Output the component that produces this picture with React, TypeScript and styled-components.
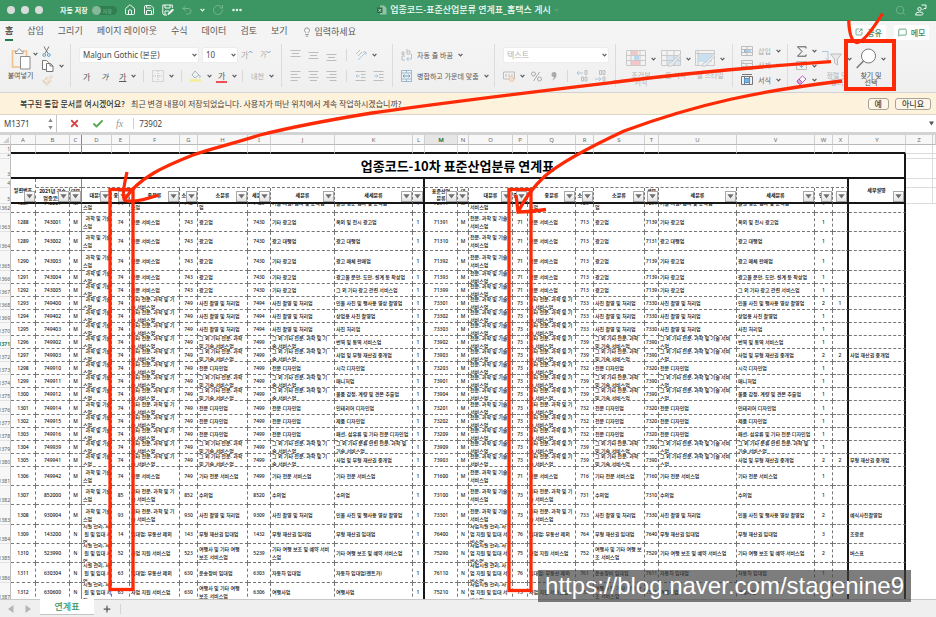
import React from "react";
import styled, { createGlobalStyle, css } from "styled-components";
import { House, Save, Undo2, RotateCw, Ellipsis, Search, Lightbulb, Paintbrush, MessageSquare, SquareArrowOutUpRight, X, Check, Plus } from "lucide-react";

const KR = '"Noto Sans", "Noto Sans CJK KR", sans-serif';
const RED = "#fd2a05";

const Global = createGlobalStyle`
  * { box-sizing: border-box; }
  body { margin: 0; background: #fff; font-family: ${KR}; overflow: hidden; }
  button, input, select { font: inherit; color: inherit; margin: 0; }
  button { padding: 0; border: 0; background: none; }
  svg { display: block; flex: none; }
`;

const Page = styled.div`
  position: relative;
  height: 100vh;
  display: flex;
  flex-direction: column;
  overflow: hidden;
`;

/* ---------- title bar ---------- */
const TitleBar = styled.header`
  flex: none;
  height: 21px;
  display: grid;
  grid-template-columns: 1fr auto 1fr;
  align-items: center;
  background: #3b9663;
  border-bottom: 1px solid #2f8856;
  color: #f3faf5;
`;
const BarSide = styled.div<{ $end?: boolean }>`
  display: flex;
  align-items: center;
  justify-content: ${(p) => (p.$end ? "flex-end" : "flex-start")};
  gap: 7px;
  padding: 0 7px;
`;
const Lights = styled.div`
  display: flex;
  gap: 6px;
  margin-right: 10px;
`;
const Light = styled.i`
  width: 8px;
  height: 8px;
  border-radius: 50%;
  background: #dadcda;
`;
const AutoSave = styled.label`
  display: flex;
  align-items: center;
  gap: 4px;
  font-size: 7px;
  font-weight: 700;
  white-space: nowrap;
`;
const Toggle = styled.button`
  display: flex;
  align-items: center;
  gap: 2px;
  width: 25px;
  height: 9px;
  border-radius: 5px;
  background: #2f7f52;
  color: #5fa57d;
  font-size: 5px;
`;
const Knob = styled.i`
  width: 9px;
  height: 9px;
  border-radius: 50%;
  background: #84b898;
`;
const BarButton = styled.button<{ $dim?: boolean }>`
  display: flex;
  align-items: center;
  color: ${(p) => (p.$dim ? "#75b590" : "#f3faf5")};
`;
const DocTitle = styled.h1`
  display: flex;
  align-items: center;
  gap: 3px;
  margin: 0;
  font-size: 9px;
  font-weight: 500;
  line-height: 12px;
`;

/* ---------- ribbon tabs ---------- */
const Tabs = styled.nav`
  flex: none;
  height: 21px;
  display: flex;
  align-items: center;
  gap: 14px;
  padding: 0 7px 0 5px;
  background: #f4f4f4;
  font-size: 9px;
  color: #5a5a5a;
`;
const Tab = styled.button<{ $on?: boolean }>`
  height: 19px;
  line-height: 15px;
  white-space: nowrap;
  border-bottom: 2px solid ${(p) => (p.$on ? "#217a4b" : "transparent")};
  font-weight: ${(p) => (p.$on ? 700 : 400)};
`;
const TellMe = styled.button`
  display: flex;
  align-items: center;
  gap: 3px;
  white-space: nowrap;
`;
const TabActions = styled.div`
  display: flex;
  gap: 8px;
  margin-left: auto;
`;
const Pill = styled.button`
  display: flex;
  align-items: center;
  justify-content: center;
  gap: 4px;
  width: 35px;
  height: 15px;
  margin-top: 1px;
  border-radius: 2px;
  background: #fff;
  color: #3a8a60;
  font-size: 8px;
  font-weight: 500;
`;

/* ---------- ribbon ---------- */
const Ribbon = styled.div`
  flex: none;
  height: 51px;
  display: flex;
  padding: 2px 0 5px;
  background: linear-gradient(#f4f4f4, #efefef);
  border-bottom: 1px solid #d2d2d2;
  color: #5a5a5a;
  font-size: 7px;
`;
const Group = styled.div<{ $w: number; $last?: boolean }>`
  flex: none;
  width: ${(p) => p.$w}px;
  display: flex;
  padding-left: 8px;
  border-right: ${(p) => (p.$last ? "0" : "1px solid #dcdcdc")};
`;
const Stack = styled.div`
  display: flex;
  flex-direction: column;
  justify-content: space-around;
`;
const Line = styled.div`
  display: flex;
  align-items: center;
  height: 20px;
`;
const Tool = styled.button<{ $w: number; $dim?: boolean; $tight?: boolean }>`
  flex: none;
  display: flex;
  align-items: center;
  gap: ${(p) => (p.$tight ? 0 : 5)}px;
  width: ${(p) => p.$w}px;
  white-space: nowrap;
  color: ${(p) => (p.$dim ? "#a9a9a9" : "#5a5a5a")};
`;
const Lead = styled.i`
  width: 4px;
`;
const Big = styled.button<{ $w: number; $dim?: boolean }>`
  width: ${(p) => p.$w}px;
  display: flex;
  flex-direction: column;
  align-items: center;
  gap: 2px;
  padding-top: 3px;
  line-height: 7px;
  white-space: pre;
  color: ${(p) => (p.$dim ? "#b3b3b3" : "#4f4f4f")};
`;
const BigIcon = styled.span`
  display: flex;
  align-items: center;
  gap: 5px;
  height: 23px;
`;
const Sep = styled.i`
  width: 9px;
  height: 12px;
  border-left: 1px solid #d8d8d8;
`;
const Combo = styled.div<{ $w: number }>`
  position: relative;
  width: ${(p) => p.$w}px;
  height: 16px;
  margin-right: 3px;
  svg { position: absolute; right: 2px; top: 6px; }
`;
const Pick = styled.select<{ $dim?: boolean }>`
  appearance: none;
  width: 100%;
  height: 16px;
  padding: 0 3px;
  border: 1px solid #ececec;
  border-radius: 2px;
  background: #fff;
  font-size: 8px;
  color: ${(p) => (p.$dim ? "#b0b0b0" : "#4a4a4a")};
`;
const Glyph = styled.span<{ $italic?: boolean; $under?: boolean; $bar?: string; $small?: boolean }>`
  font-size: ${(p) => (p.$small ? 7 : 8)}px;
  line-height: 11px;
  font-style: ${(p) => (p.$italic ? "italic" : "normal")};
  text-decoration: ${(p) => (p.$under ? "underline" : "none")};
  border-bottom: ${(p) => (p.$bar ? `2px solid ${p.$bar}` : "0")};
  padding: ${(p) => (p.$bar ? "0 2px" : "0")};
`;

const Chevron = ({ c = "#5a5a5a" }: { c?: string }) => (
  <svg width="5" height="4" viewBox="0 0 5 4" fill="none" stroke={c} strokeWidth="1.2"><path d="M.6.8 2.5 2.8 4.4.8" /></svg>
);
const Ico = ({ w = 12, h = 12, s = "#bdbdbd", children }: { w?: number; h?: number; s?: string; children: React.ReactNode }) => (
  <svg width={w} height={h} viewBox={`0 0 ${w} ${h}`} fill="none" stroke={s} strokeWidth="1">{children}</svg>
);
const Bars = ({ d }: { d: string }) => <Ico w={11} h={12}><path d={d} /></Ico>;
const BLUE = "#a9c8e0";

function RibbonBar() {
  return (
    <Ribbon>
      <Group $w={71}>
        <Big $w={25}>
          <BigIcon>
            <svg width="20" height="22" viewBox="0 0 20 22" fill="none">
              <path d="M5 3H1.500v16H9M12 3h3.500v5" stroke="#f3c08a" strokeWidth="1.600" />
              <path d="M4.500 5.500V3.200h2Q7 .8 8.300.8t1.800 2.400h2v2.300z" fill="#fff" stroke="#999" />
              <path d="M9.500 8.500h9.500v12.500H9.500z" fill="#fff" stroke="#8c8c8c" />
            </svg>
          </BigIcon>
          붙여넣기
        </Big>
        <Line><Tool $w={9} aria-label="붙여넣기 옵션"><Chevron /></Tool></Line>
        <Stack>
          <Tool $w={18} aria-label="잘라내기">
            <svg width="9" height="11" viewBox="0 0 9 11" fill="none"><path d="M2 .5 6 7.500M7 .5 3 7.500" stroke="#777" /><circle cx="2.200" cy="9" r="1.400" stroke="#5b9fd0" /><circle cx="6.800" cy="9" r="1.400" stroke="#5b9fd0" /></svg>
          </Tool>
          <Tool $w={22} aria-label="복사">
            <svg width="12" height="12" viewBox="0 0 12 12" fill="#fff" stroke="#777"><path d="M.5.5h4l2 2v7h-6z" /><path d="M4.500 3.500h4l2.500 2.500v5.500H4.500zM8 3.500V6h3" /></svg>
            <Chevron />
          </Tool>
          <Tool $w={18} aria-label="서식 복사"><Paintbrush size={11} color="#e3c9a8" strokeWidth={2} /></Tool>
        </Stack>
      </Group>

      <Group $w={211}>
        <Stack>
          <Line>
            <Combo $w={120}><Pick aria-label="글꼴"><option>Malgun Gothic (본문)</option></Pick><Chevron /></Combo>
            <Combo $w={36}><Pick aria-label="글꼴 크기"><option>10</option></Pick><Chevron /></Combo>
            <Tool $w={19} $tight $dim><Glyph>가</Glyph><Ico w={5} h={10} s="#6aa5d0"><path d="M.5 3 2.500 1l2 2" /></Ico></Tool>
            <Tool $w={17} $tight $dim><Glyph $small>가</Glyph><Ico w={5} h={10} s="#6aa5d0"><path d="M.5 1l2 2 2-2" /></Ico></Tool>
          </Line>
          <Line>
            <Lead />
            <Tool $w={18}><Glyph>가</Glyph></Tool>
            <Tool $w={18}><Glyph $italic>가</Glyph></Tool>
            <Tool $w={24}><Glyph $under>가</Glyph><Chevron /></Tool>
            <Sep />
            <Tool $w={29}><Ico><path d="M.5.5h11v11H.5zM6 1v10M1 6h10" strokeDasharray="1 1" /></Ico><Chevron /></Tool>
            <Sep />
            <Tool $w={26}>
              <svg width="12" height="12" viewBox="0 0 12 12" fill="none"><path d="m5 1 4 4-4 3-3-3zM9.500 5q1.500 2 0 3" stroke="#a5b5bd" /><path d="M0 10.500h11" stroke="#f4ee9a" strokeWidth="2.500" /></svg>
              <Chevron />
            </Tool>
            <Tool $w={26}><Glyph $bar="#ee4f55">가</Glyph><Chevron /></Tool>
            <Sep />
            <Tool $w={24} $dim><Glyph $small>내천</Glyph><Chevron /></Tool>
          </Line>
        </Stack>
      </Group>

      <Group $w={111}>
        <Stack>
          <Line>
            <Tool $w={18}><Bars d="M.5 1.500h10M2 4.500h7M.5 7.500h10" /></Tool>
            <Tool $w={18}><Bars d="M.5 3.500h10M2 6.500h7M.5 9.500h10" /></Tool>
            <Tool $w={20}><Bars d="M.5 5.500h10M2 8.500h7M.5 11.500h10" /></Tool>
            <Sep />
            <Tool $w={26}><Ico><path d="M1 5l4-4M3 7l4-4" /><path d="M3 11 11 3M8 3h3v3" stroke={BLUE} /></Ico><Chevron /></Tool>
          </Line>
          <Line>
            <Tool $w={18}><Bars d="M.5 1.500h10M.5 4.500h7M.5 7.500h10M.5 10.500h7" /></Tool>
            <Tool $w={18}><Bars d="M.5 1.500h10M2 4.500h7M.5 7.500h10M2 10.500h7" /></Tool>
            <Tool $w={20}><Bars d="M.5 1.500h10M3.500 4.500h7M.5 7.500h10M3.500 10.500h7" /></Tool>
            <Sep />
            <Tool $w={18}><Ico w={11}><path d="M.5 1.500h10M6 4.500h4.500M6 7.500h4.500M.5 10.500h10" /><path d="M5 6H1M2.500 4.500 1 6l1.500 1.500" stroke={BLUE} /></Ico></Tool>
            <Tool $w={12}><Ico w={11}><path d="M.5 1.500h10M6 4.500h4.500M6 7.500h4.500M.5 10.500h10" /><path d="M1 6h4M3.500 4.500 5 6 3.500 7.500" stroke={BLUE} /></Ico></Tool>
          </Line>
        </Stack>
      </Group>

      <Group $w={102}>
        <Stack>
          <Line><Tool $w={90}><Ico w={11}><path d="M1 5V3h2v2.500H1zM6 0v5h3V2H6M4 11H1V7h3" /><path d="M10.500 5v5H6M7.500 8 5.500 10l2 2" stroke={BLUE} /></Ico>자동 줄 바꿈<Chevron /></Tool></Line>
          <Line><Tool $w={90}><Ico w={11}><path d="M.5.5h10v11H.5zM.5 3h10M.5 9h10M5.500.5V3M5.500 9v2.500" stroke="#9cb9cc" /><path d="M2 6h7M3.500 4.500 2 6l1.500 1.500M7.500 4.500 9 6 7.500 7.500" stroke="#6aa5d0" /></Ico>병합하고 가운데 맞춤<Chevron /></Tool></Line>
        </Stack>
      </Group>

      <Group $w={121}>
        <Stack>
          <Line><Combo $w={106}><Pick $dim aria-label="표시 형식"><option>텍스트</option></Pick><Chevron /></Combo></Line>
          <Line>
            <Tool $w={28}><Ico><path d="M.5 2h11v7H.5zM3 4v3M6 4v3M9 4v3" /><circle cx="8.500" cy="9" r="2.500" fill="#f7dcc6" stroke="#efc9aa" /></Ico><Chevron /></Tool>
            <Tool $w={20} $dim><svg width="11" height="11" viewBox="0 0 11 11" fill="none" stroke="#aaa"><circle cx="2.500" cy="3" r="2" /><circle cx="8.500" cy="8" r="2" /><path d="M8.500 1l-6 9" /></svg></Tool>
            <Tool $w={16} $dim><svg width="6" height="9" viewBox="0 0 6 9"><path d="M3 0a2.500 2.500 0 0 1 2.500 2.700Q5.500 6.500 1 8.500 3 6.500 3 5A2.500 2.500 0 0 1 3 0z" fill="#aaa" /></svg></Tool>
            <Sep />
            <Tool $w={18}><Ico><path d="M9 .5h2v4H9zM5.500 7h2v4h-2zM9 7h2v4H9z" /><path d="M7 3H1M3 1 1 3l2 2" stroke={BLUE} /></Ico></Tool>
            <Tool $w={12}><Ico><path d="M5.500.5h2v4h-2zM9 .5h2v4H9zM9 7h2v4H9z" /><path d="M1 9h6M5 7l2 2-2 2" stroke={BLUE} /></Ico></Tool>
          </Line>
        </Stack>
      </Group>

      <Group $w={117}>
        <Big $w={34} $dim>
          <BigIcon><Ico w={20} h={17} s="#cacaca"><path d="M5 1h7v4H5zM5 11h9v4H5z" fill="#f6c6c6" stroke="none" /><path d="M8 6h5v4H8z" fill="#bcd7ec" stroke="none" /><path d="M.5.5h19v15H.5zM.5 5.500h19M.5 10.500h19M5 .5v15M14 .5v15" /></Ico><Chevron /></BigIcon>
          {"조건부\n서식"}
        </Big>
        <Big $w={35} $dim>
          <BigIcon><Ico w={20} h={17} s="#cacaca"><path d="M6 5h13v10H6z" fill="#d6e6f2" stroke="none" /><path d="M.5.5h19v15H.5zM.5 5.500h19M.5 10.500h19M6 .5v15M13 .5v15" /><path d="m19 4-8 8q-3 0-4 4 5 1 6-2.500l7-8z" fill="#e6eef3" /></Ico><Chevron /></BigIcon>
          표 서식
        </Big>
        <Big $w={34} $dim>
          <BigIcon><Ico w={20} h={17} s="#cacaca"><path d="M3 4h14v8H3z" fill="#c9e0f0" stroke="none" /><path d="M.5.5h19v15H.5zM.5 3.500h19M3 .5v15" /><path d="m19 4-8 8q-3 0-4 4 5 1 6-2.500l7-8z" fill="#e6eef3" /></Ico><Chevron /></BigIcon>
          셀 스타일
        </Big>
      </Group>

      <Group $w={55}>
        <Stack>
          <Tool $w={46} $dim><Ico h={10}><path d="M.5.5h11v9H.5zM.5 3.500h11M.5 6.500h11M6 .5v9" /><path d="M3 5h7M5 3 3 5l2 2" stroke="#7ab0d8" /></Ico>삽입<Chevron /></Tool>
          <Tool $w={46} $dim><Ico h={10}><path d="M.5.5h11v9H.5zM.5 3.500h11M.5 6.500h11" /><path d="M2 2l7 6" stroke={BLUE} /></Ico>삭제<Chevron /></Tool>
          <Tool $w={46}><Ico h={11} s="#777"><path d="M1 .5h10M.5 2.500h11v8H.5zM3.500 2.500v8M8.500 2.500v8" /><path d="M3.500 4.500h5v4h-5z" fill="#79b4e0" stroke="#4f93c8" /></Ico>서식<Chevron /></Tool>
        </Stack>
      </Group>

      <Group $w={148} $last>
        <Stack>
          <Tool $w={24} aria-label="합계"><Ico w={11} h={11} s="#555"><path d="M10 2.500V.8H1.500L6 5.500l-4.500 4.700H10V8.500" /></Ico><Chevron /></Tool>
          <Tool $w={24} aria-label="채우기"><Ico w={11} h={11}><path d="M.5 1.500h10v8H.5z" /><path d="M5.500 3v4.500M3.500 5.500l2 2 2-2" stroke="#7ab0d8" /></Ico><Chevron /></Tool>
          <Tool $w={24} aria-label="지우기"><Ico w={11} h={10} s="#b45fb8"><path d="m1 6 5.500-5 3.500 3-5 5H3z" fill="#fff" /><path d="m1 6 2-2 3.500 3.500L5 9H3z" fill="#dda6df" /></Ico><Chevron /></Tool>
        </Stack>
        <Big $w={34} $dim>
          <BigIcon>
            <Ico w={20} h={18}><path d="M0 1.500h6v9M3.500 8 6 10.500" stroke={BLUE} /><path d="M8.500 4h11l-4 5v6l-3-2V9z" fill="#e8e8e8" /></Ico>
            <Chevron />
          </BigIcon>
          {"정렬 및\n필터"}
        </Big>
        <Big $w={34}>
          <BigIcon>
            <Ico w={20} h={21} s="#777"><circle cx="12.500" cy="8" r="7" fill="#fff" /><path d="M7.500 13 .7 20" strokeWidth="1.500" /></Ico>
            <Chevron />
          </BigIcon>
          {"찾기 및\n선택"}
        </Big>
      </Group>
    </Ribbon>
  );
}

/* ---------- notice and formula bar ---------- */
const Notice = styled.section`
  flex: none;
  height: 22px;
  display: flex;
  align-items: center;
  gap: 6px;
  padding: 0 5px 0 20px;
  background: #fdf2dc;
  border-bottom: 1px solid #dcd6ca;
  font-size: 8px;
  color: #444;
  white-space: nowrap;
  p { margin: 0 auto 0 0; font-family: "Noto Sans CJK KR", sans-serif; }
  b { margin-right: 6px; color: #333; font-weight: 500; }
`;
const Answer = styled.button`
  height: 12px;
  padding: 0 6px;
  border: 1px solid #a9a49a;
  border-radius: 3px;
  background: #fef7e9;
  line-height: 9px;
  font-weight: 500;
`;
const Formula = styled.section`
  flex: none;
  height: 17px;
  display: flex;
  align-items: center;
  gap: 12px;
  padding-right: 2px;
  background: #fff;
  font-size: 8px;
  color: #444;
`;
const NameBox = styled.label`
  display: flex;
  align-items: center;
  width: 57px;
  height: 17px;
  padding: 0 3px 0 4px;
  border-right: 1px solid #c4c4c4;
`;
const Field = styled.input`
  flex: 1;
  min-width: 0;
  padding: 0;
  border: 0;
  outline: 0;
  background: transparent;
`;
const Entry = styled(Field)`
  height: 11px;
  margin-left: -2px;
  padding-left: 5px;
  border-left: 1px solid #d0d0d0;
`;
const Fx = styled.button`
  font: italic 10px "Liberation Serif", serif;
  color: #999;
`;

/* ---------- sheet ---------- */
const COLS: [string, number][] = [
  ["A", 25], ["B", 34], ["C", 12], ["D", 30], ["E", 18], ["F", 50], ["G", 18], ["H", 50], ["I", 23], ["J", 64], ["K", 78], ["L", 12],
  ["M", 33], ["N", 11], ["O", 44], ["P", 15], ["Q", 48], ["R", 18], ["S", 51], ["T", 14], ["U", 78], ["V", 78], ["W", 18], ["X", 16], ["Y", 57], ["Z", 27],
];

const Sheet = styled.main`
  flex: 1 1 0;
  min-height: 0;
  overflow: hidden;
  border-top: 3px solid #d3d3d3;
  background: #fff;
`;
const Grid = styled.table`
  width: 100%;
  table-layout: fixed;
  border-collapse: separate;
  border-spacing: 0;
  font-family: ${KR};
  font-size: 5px;
  font-weight: 500;
  line-height: 8px;
  color: #111;
  th, td { padding: 0; overflow: hidden; }
`;
const Letter = styled.th<{ $on?: boolean; $freeze?: boolean }>`
  height: 10px;
  font-size: 6px;
  font-weight: ${(p) => (p.$on ? 700 : 400)};
  color: ${(p) => (p.$on ? "#217a4b" : "#6a6a6a")};
  background: ${(p) => (p.$on ? "#e6e6e6" : "#f7f7f7")};
  border-right: 1px solid ${(p) => (p.$freeze ? "#888" : "#d0d0d0")};
  border-bottom: 1px solid #b8b8b8;
`;
const RowNo = styled.th<{ $h: number; $on?: boolean }>`
  height: ${(p) => p.$h}px;
  background: #f7f7f7;
  border-right: 1px solid #bdbdbd;
  border-bottom: 1px solid #e2e2e2;
  color: ${(p) => (p.$on ? "#217a4b" : "#5a5a5a")};
  font-size: 5px;
  line-height: 7px;
  font-weight: ${(p) => (p.$on ? 700 : 400)};
  div {
    display: flex;
    justify-content: flex-end;
    align-items: flex-end;
    height: ${(p) => p.$h - 1}px;
    overflow: hidden;
  }
`;
type Edge = "thick" | "dash" | "line" | "none" | "freeze";
const edge: Record<Edge, string> = {
  thick: "2px solid #161616",
  dash: "1px dashed #777",
  line: "1px solid #dcdcdc",
  freeze: "1px solid #888",
  none: "0",
};
const Blank = styled.td<{ $r?: Edge; $b?: Edge }>`
  border-right: ${(p) => edge[p.$r ?? "none"]};
  border-bottom: ${(p) => edge[p.$b ?? "none"]};
`;
const Banner = styled(Blank)`
  text-align: center;
  font-family: "Noto Sans CJK KR", sans-serif;
  font-size: 13px;
  font-weight: 700;
  line-height: 20px;
  color: #000;
`;
const Head = styled.th<{ $r?: Edge }>`
  position: relative;
  border-right: ${(p) => edge[p.$r ?? "dash"]};
  border-bottom: 2px solid #161616;
  font-weight: 700;
  line-height: 7px;
  white-space: pre;
  div { display: flex; align-items: center; justify-content: center; overflow: hidden; height: 14px; }
`;
const Filter = styled.button`
  position: absolute;
  right: 0;
  bottom: 0;
  width: 11px;
  height: 11px;
  display: flex;
  align-items: center;
  justify-content: center;
  border: 1px solid #a8a8a8;
  background: linear-gradient(#fff, #e4e4e4);
`;
const Cell = styled.td<{ $h: number; $r: Edge; $left?: boolean; $cut?: boolean }>`
  border-right: ${(p) => edge[p.$r]};
  border-bottom: ${edge.dash};
  white-space: pre;
  div {
    display: flex;
    align-items: ${(p) => (p.$cut ? "flex-end" : "center")};
    justify-content: ${(p) => (p.$left ? "flex-start" : "center")};
    height: ${(p) => p.$h - 1}px;
    padding-left: ${(p) => (p.$left ? 1 : 0)}px;
    overflow: hidden;
  }
  ${(p) => p.$cut && css`span { display: flex; align-items: center; min-height: 18px; }`}
`;

const ETC = "기타 전문, 과학 및 기\n술 서비스업";
const PRO = "전문 서비스업";
const RENT = "임대업; 부동산 제외";
const BIZ = "사업 지원 서비스업";
const OTHER = "그 외 기타 전문, 과학\n및 기술 서비스업";
const OTHER_J = "그 외 기타 전문, 과학 및 기\n술 서비스업";
const OTHER_U = "그 외 기타 전문, 과학 및 기술 서비\n스업";
const PHOTO = "사진 촬영 및 처리업";
const DESIGN = "전문 디자인업";
const AD = "광고업";
const SHOOT = "인물 사진 및 행사용 영상 촬영업";
const DEAL = "사업 및 무형 재산권 중개업";

interface Rec {
  row: number; h: number; no: number; code: string; sec: "M" | "N"; mid: string; f: string; g: string; hh: string; i: string; j: string; k: string;
  m: string; p: string; r: string; t: string; w?: string; x?: string; y?: string; s?: string; u?: string; v?: string;
}
const rec = (row: number, h: number, no: number, code: string, sec: "M" | "N", mid: string, f: string, g: string, hh: string, i: string, j: string, k: string, m: string, p: string, r: string, t: string, more: Partial<Rec> = {}): Rec =>
  ({ row, h, no, code, sec, mid, f, g, hh, i, j, k, m, p, r, t, ...more });

const DATA: Rec[] = [
  rec(1362, 9, 1287, "742207", "M", "74", "그 외 기타 과학기술 서비\n스업", "742", "기타 과학기술 서비스\n업", "7429", "기술 시험, 검사 및 분석업", "물질 성분 검사 및 분석업", "72911", "72", "729", "7291"),
  rec(1363, 19, 1288, "743001", "M", "74", PRO, "743", AD, "7430", "기타 광고업", "옥외 및 전시 광고업", "71391", "71", "713", "7139"),
  rec(1364, 19, 1289, "743002", "M", "74", PRO, "743", AD, "7430", "광고 대행업", "광고 대행업", "71310", "71", "713", "7131"),
  rec(1365, 20, 1290, "743003", "M", "74", PRO, "743", AD, "7430", "기타 광고업", "광고 매체 판매업", "71392", "71", "713", "7139"),
  rec(1366, 13, 1291, "743004", "M", "74", PRO, "743", AD, "7430", "기타 광고업", "광고물 문안, 도안, 설계 등 작성업", "71393", "71", "713", "7139"),
  rec(1367, 13, 1292, "743005", "M", "74", PRO, "743", AD, "7430", "기타 광고업", "그 외 기타 광고 관련 서비스업", "71399", "71", "713", "7139"),
  rec(1368, 13, 1293, "749400", "M", "74", ETC, "749", PHOTO, "7494", PHOTO, SHOOT, "73301", "73", "733", "7330", { w: "2", x: "1" }),
  rec(1369, 13, 1294, "749402", "M", "74", ETC, "749", PHOTO, "7494", PHOTO, "상업용 사진 촬영업", "73302", "73", "733", "7330"),
  rec(1370, 13, 1295, "749403", "M", "74", ETC, "749", PHOTO, "7494", PHOTO, "사진 처리업", "73303", "73", "733", "7330"),
  rec(1371, 13, 1296, "749902", "M", "74", ETC, "749", OTHER, "7499", OTHER_J, "번역 및 통역 서비스업", "73902", "73", "739", "7390"),
  rec(1372, 13, 1297, "749903", "M", "74", ETC, "749", OTHER, "7499", OTHER_J, DEAL, "73903", "73", "739", "7390", { w: "2", x: "2", y: "사업 재산권 중개업" }),
  rec(1373, 13, 1298, "749910", "M", "74", ETC, "749", DESIGN, "7499", DESIGN, "시각 디자인업", "73203", "73", "732", "7320"),
  rec(1374, 13, 1299, "749911", "M", "74", ETC, "749", OTHER, "7499", OTHER_J, "매니저업", "73901", "73", "739", "7390"),
  rec(1375, 13, 1300, "749912", "M", "74", ETC, "749", OTHER, "7499", OTHER_J, "물품 감정, 계량 및 견본 추출업", "73904", "73", "739", "7390"),
  rec(1376, 14, 1301, "749914", "M", "74", ETC, "749", DESIGN, "7499", DESIGN, "인테리어 디자인업", "73201", "73", "732", "7320"),
  rec(1377, 13, 1302, "749915", "M", "74", ETC, "749", DESIGN, "7499", DESIGN, "제품 디자인업", "73202", "73", "732", "7320"),
  rec(1378, 13, 1303, "749916", "M", "74", ETC, "749", DESIGN, "7499", DESIGN, "패션, 섬유류 및 기타 전문 디자인업", "73209", "73", "732", "7320"),
  rec(1379, 13, 1304, "749939", "M", "74", ETC, "749", OTHER, "7499", OTHER_J, "그 외 기타 분류 안된 전문, 과학 및\n기술 서비스업", "73909", "73", "739", "7390"),
  rec(1380, 13, 1305, "749941", "M", "74", ETC, "749", OTHER, "7499", OTHER_J, DEAL, "73903", "73", "739", "7390", { w: "2", x: "2", y: "무형 재산권 중개업" }),
  rec(1381, 19, 1306, "749942", "M", "74", PRO, "749", "기타 전문 서비스업", "7499", "기타 전문 서비스업", "기타 전문 서비스업", "71600", "71", "716", "7160"),
  rec(1382, 19, 1307, "852000", "M", "85", ETC, "852", "수의업", "8520", "수의업", "수의업", "73100", "73", "731", "7310"),
  rec(1383, 20, 1308, "930904", "M", "93", ETC, "930", PHOTO, "9309", PHOTO, SHOOT, "73301", "73", "733", "7330", { w: "2", y: "예식사진촬영업" }),
  rec(1384, 19, 1309, "143200", "N", "14", RENT, "143", "무형 재산권 임대업", "1432", "무형 재산권 임대업", "무형 재산권 임대업", "76400", "76", "764", "7640", { w: "3", y: "조광료" }),
  rec(1385, 19, 1310, "523990", "N", "52", BIZ, "523", "여행사 및 기타 여행\n보조 서비스업", "5239", "기타 여행 보조 및 예약 서비\n스업", "기타 여행 보조 및 예약 서비스업", "75290", "75", "752", "7529", { w: "2", y: "버스표", s: "여행사 및 기타 여행 보\n조 서비스업", u: "기타 여행 보조 및 예약 서비스업" }),
  rec(1386, 20, 1311, "630304", "N", "63", RENT, "630", "운송장비 임대업", "6303", "자동차 임대업", "자동차 임대업(렌트카)", "76110", "76", "761", "7611", { v: "자동차 임대업" }),
  rec(1387, 19, 1312, "630600", "N", "63", BIZ, "630", "여행사 및 기타 여행\n보조 서비스업", "6306", "여행사업", "여행사업", "75210", "75", "752", "7521", { s: "여행사 및 기타 여행 보\n조 서비스업" }),
];

const LEFT = new Set([3, 5, 7, 9, 10, 14, 16, 18, 20, 21, 24]);
const side = (n: number): Edge => (n === 2 ? "freeze" : n === 11 || n === 23 || n === 24 ? "thick" : "dash");
const values = (d: Rec): string[] => [
  String(d.no), d.code, d.sec,
  d.sec === "M" ? "  과학 및 기술\n스업" : "시설 관리, 사\n 원 및 임대 서\n업",
  d.mid, d.f, d.g, d.hh, d.i, d.j, d.k, "1",
  d.m, d.sec,
  d.sec === "M" ? "전문, 과학 및 기술\n서비스업" : "사업시설 관리, 사\n업 지원 및 임대 서\n비스업",
  d.p, d.f, d.r, d.s ?? d.hh, d.t, d.u ?? (d.j === OTHER_J ? OTHER_U : d.j), d.v ?? d.k, d.w ?? "1", d.x ?? "", d.y ?? "",
];
const HEADS = ["2021년 귀속\n업종코드", "대분\n류", "대분류", "중분류", "중분류", "소분류", "소분류", "세분류", "세분류", "세세분류", "", "표준산업\n분류", "대\n분", "대분류", "중분류", "중분류", "소분류", "소분류", "세분\n류", "세분류", "세세분류", "연계", "특이"];

const FilterButton = ({ name }: { name: string }) => (
  <Filter aria-label={`${name} 필터`}><svg width="7" height="5" viewBox="0 0 7 5"><path d="M.3.3h6.400L3.500 4.600z" fill="#707070" /></svg></Filter>
);
const No = ({ n, h, on }: { n: number; h: number; on?: boolean }) => <RowNo $h={h} $on={on} scope="row"><div>{n}</div></RowNo>;
const Outside = () => (<><Blank $r="line" $b="line" /><Blank $b="line" /></>);

function SheetGrid() {
  return (
    <Sheet>
      <Grid>
        <colgroup>
          <col width={11} />
          {COLS.map(([c, w]) => <col key={c} width={w} />)}
          <col />
        </colgroup>
        <thead>
          <tr>
            <Letter><svg width="10" height="9" viewBox="0 0 10 9"><path d="M9 2v6H3z" fill="#cfcfcf" /></svg></Letter>
            {COLS.map(([c]) => <Letter key={c} $on={c === "M"} $freeze={c === "C"}>{c}</Letter>)}
            <Letter />
          </tr>
        </thead>
        <tbody>
          <tr>
            <No n={1} h={9} />
            {COLS.slice(0, 25).map(([c]) => <Blank key={c} $r={c === "C" ? "freeze" : "line"} $b="thick" />)}
            <Outside />
          </tr>
          <tr><No n={2} h={5} /><Banner colSpan={25} rowSpan={2} $r="thick" $b="thick">업종코드-10차 표준산업분류 연계표</Banner><Outside /></tr>
          <tr><No n={3} h={20} /><Outside /></tr>
          <tr>
            <No n={4} h={9} />
            <Head rowSpan={2} scope="col"><div>일련번호</div><FilterButton name="일련번호" /></Head>
            <Blank colSpan={2} $r="freeze" $b="dash" />
            <Blank colSpan={9} $r="thick" $b="dash" />
            <Blank colSpan={12} $r="thick" $b="dash" />
            <Head rowSpan={2} scope="col" $r="thick"><div>세부설명</div><FilterButton name="세부설명" /></Head>
            <Outside />
          </tr>
          <tr>
            <No n={5} h={16} />
            {HEADS.map((t, n) => (
              <Head key={n} scope="col" $r={side(n + 1)}><div>{t}</div><FilterButton name={t || "구분"} /></Head>
            ))}
            <Outside />
          </tr>
          {DATA.map((d) => (
            <tr key={d.row}>
              <No n={d.row} h={d.h} on={d.row === 1371} />
              {values(d).map((t, n) => (
                <Cell key={n} $h={d.h} $r={side(n)} $left={LEFT.has(n)} $cut={d.row === 1362}><div><span>{t}</span></div></Cell>
              ))}
              <td /><td />
            </tr>
          ))}
        </tbody>
      </Grid>
    </Sheet>
  );
}

/* ---------- sheet tabs ---------- */
const Footer = styled.footer`
  flex: none;
  height: 18px;
  display: flex;
  align-items: center;
  background: #efefef;
  border-top: 1px solid #c8c8c8;
  color: #555;
`;
const Arrows = styled.div`
  display: flex;
  gap: 11px;
  width: 40px;
  padding-left: 8px;
`;
const SheetTab = styled.button`
  align-self: flex-start;
  width: 54px;
  height: 16px;
  margin-top: -1px;
  background: #fff;
  border-bottom: 1px solid #c4c4c4;
  color: #3a9563;
  font-size: 9px;
  font-weight: 500;
  line-height: 14px;
`;
const AddTab = styled.button`
  display: flex;
  justify-content: center;
  width: 27px;
  border-right: 1px solid #d4d4d4;
`;

/* ---------- marks drawn over the window ---------- */
const Marks = styled.svg`
  position: absolute;
  left: 0;
  top: 0;
  pointer-events: none;
`;
const Watermark = styled.div`
  position: absolute;
  right: 25px;
  bottom: 15px;
  padding: 0 7px;
  background: rgba(64, 64, 64, 0.68);
  color: #fff;
  font: 24px/32px "Liberation Sans", Arial, sans-serif;
`;

export default function App() {
  return (
    <Page>
      <Global />
      <TitleBar>
        <BarSide>
          <Lights><Light /><Light /><Light /></Lights>
          <AutoSave>자동 저장<Toggle role="switch" aria-checked="false"><Knob />저장</Toggle></AutoSave>
          <BarButton aria-label="홈"><House size={12} strokeWidth={2} /></BarButton>
          <BarButton aria-label="저장"><Save size={12} strokeWidth={2} /></BarButton>
          <BarButton aria-label="다른 이름으로 저장">
            <svg width="12" height="12" viewBox="0 0 12 12" fill="none" stroke="currentColor"><path d="M5 11H2L.8 9.800V1h9.500v3M3 1v3h5V1M3 11V7h4" /><path d="m6.500 9 4-4 1 1-4 4-1.500.5z" fill="currentColor" /></svg>
          </BarButton>
          <BarButton aria-label="실행 취소" $dim><Undo2 size={12} strokeWidth={2} /></BarButton>
          <BarButton aria-label="실행 취소 목록"><Chevron c="#f3faf5" /></BarButton>
          <BarButton aria-label="다시 실행" $dim><RotateCw size={12} strokeWidth={2} /></BarButton>
          <BarButton aria-label="더 보기"><Ellipsis size={12} strokeWidth={3} /></BarButton>
        </BarSide>
        <DocTitle>
          <svg width="10" height="10" viewBox="0 0 10 10"><path d="M3 .5h4L9.500 3v6.500H3z" fill="#8fc4a6" /><path d="M0 2.500h5.500V8H0z" fill="#2a6f48" /><path d="m1.500 4 2.500 2.700M4 4 1.500 6.700" stroke="#cfe6d8" strokeWidth=".8" /></svg>
          업종코드-표준산업분류 연계표_홈택스 게시
          <Chevron c="#5fa57d" />
        </DocTitle>
        <BarSide $end>
          <BarButton aria-label="검색" $dim><Search size={11} /></BarButton>
          <BarButton aria-label="공동 작업">
            <svg width="16" height="12" viewBox="0 0 16 12" fill="none" stroke="currentColor"><circle cx="6.500" cy="5" r="1.700" /><path d="M2.500 11q0-3 4-3t3.500 1.500Q10 11 8.500 11zM8.500 1H13v3.500h-2L9.500 6" /></svg>
          </BarButton>
        </BarSide>
      </TitleBar>

      <Tabs>
        {["홈", "삽입", "그리기", "페이지 레이아웃", "수식", "데이터", "검토", "보기"].map((t, n) => <Tab key={t} $on={n === 0}>{t}</Tab>)}
        <TellMe><Lightbulb size={10} strokeWidth={2} color="#888" />입력하세요</TellMe>
        <TabActions>
          <Pill><SquareArrowOutUpRight size={8} />공유</Pill>
          <Pill><MessageSquare size={9} />메모</Pill>
        </TabActions>
      </Tabs>

      <RibbonBar />

      <Notice>
        <p><b>복구된 통합 문서를 여시겠어요?</b>최근 변경 내용이 저장되었습니다. 사용자가 떠난 위치에서 계속 작업하시겠습니까?</p>
        <Answer>예</Answer>
        <Answer>아니요</Answer>
      </Notice>

      <Formula>
        <NameBox>
          <Field aria-label="이름 상자" defaultValue="M1371" />
          <svg width="5" height="12" viewBox="0 0 5 12" fill="#8a8a8a"><path d="M2.500.5 4.700 4H.3zM2.500 11.500.3 8h4.400z" /></svg>
        </NameBox>
        <BarButton aria-label="취소"><X size={11} color="#d9464a" strokeWidth={4} /></BarButton>
        <BarButton aria-label="입력"><Check size={12} color="#5cab55" strokeWidth={4} /></BarButton>
        <Fx>fx</Fx>
        <Entry aria-label="수식 입력줄" defaultValue="73902" />
        <svg width="5" height="5" viewBox="0 0 5 5"><path d="M0 .5h5L2.500 4.500z" fill="#555" /></svg>
      </Formula>

      <SheetGrid />

      <Footer>
        <Arrows>
          <svg width="6" height="8" viewBox="0 0 6 8"><path d="M5.500 0v8L0 4z" fill="#b5b5b5" /></svg>
          <svg width="6" height="8" viewBox="0 0 6 8"><path d="M.5 0v8L6 4z" fill="#b5b5b5" /></svg>
        </Arrows>
        <SheetTab>연계표</SheetTab>
        <AddTab aria-label="시트 추가"><Plus size={10} strokeWidth={3} /></AddTab>
      </Footer>

      <Watermark>https://blog.naver.com/stagenine9</Watermark>
      <Marks width="936" height="617" viewBox="0 0 936 617" fill="none" stroke={RED} strokeWidth="3.300" strokeLinecap="butt">
        <rect x="846" y="41" width="48" height="48" strokeWidth="4" />
        <rect x="110" y="189.500" width="23" height="400" />
        <rect x="509" y="189.500" width="22" height="401" />
        <path d="M848.700 20Q849.500 42 857 42.500 865 42 882.500 13.500" />
        <path d="M831 61.700C760 66.500 690 73 624 81 540 91 455 101 372 113 335 119 300 125 260 135 232 144 213 148 193 155 165 166 138 178 125 199" />
        <path d="M127 172Q121 198 125 200.500 136 203 158.500 195" />
        <path d="M842 81C760 91 700 103 624 131 590 147 560 163 545 176 532 188 525 198 518 212" />
        <path d="M516 195 518 212Q530 212 546 209.500" />
      </Marks>
    </Page>
  );
}
